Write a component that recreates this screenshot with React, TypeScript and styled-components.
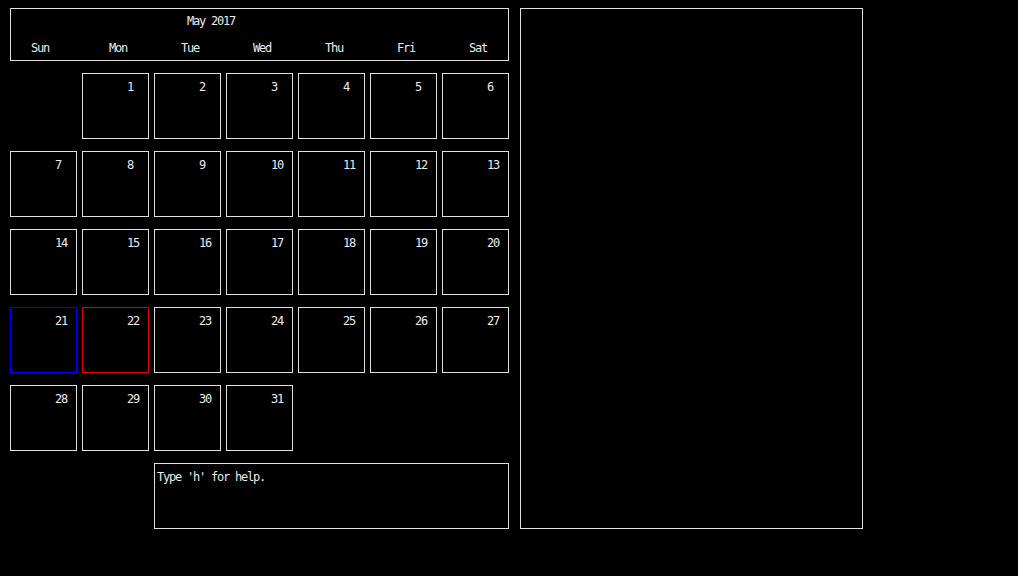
import React from "react";
import styled, { createGlobalStyle } from "styled-components";

const Global = createGlobalStyle`
  html, body { margin: 0; padding: 0; background: #000; }
  body { font-family: "DejaVu Sans Mono", "Liberation Mono", monospace; font-size: 12px; color: #ececec; }
`;

const Screen = styled.div`
  display: flex;
  gap: 11px;
  padding: 8px 10px;
  width: 1018px;
  height: 576px;
  box-sizing: border-box;
  background: #000;
`;

const LeftColumn = styled.div`
  display: flex;
  flex-direction: column;
  gap: 12px;
  width: 499px;
`;

const Header = styled.div`
  box-sizing: border-box;
  height: 53px;
  border: 1px solid #e0e0e0;
  display: flex;
  flex-direction: column;
  padding-top: 6px;
`;

const Title = styled.div`
  padding-left: 176px;
  line-height: 13px;
  height: 13px;
  letter-spacing: -1.22px;
`;

const WeekRow = styled.div`
  display: grid;
  grid-template-columns: repeat(7, 67px);
  column-gap: 5px;
  margin-top: 14px;
  margin-left: -2px;
`;

const DayName = styled.div<{ $offset: number }>`
  padding-left: ${(p) => p.$offset}px;
  line-height: 13px;
  letter-spacing: -1.22px;
`;

const Grid = styled.div`
  display: grid;
  grid-template-columns: repeat(7, 67px);
  grid-auto-rows: 66px;
  column-gap: 5px;
  row-gap: 12px;
`;

const Cell = styled.div<{ $col?: number; $color?: string }>`
  box-sizing: border-box;
  border: 1px solid ${(p) => p.$color || "#e0e0e0"};
  padding: 7px 0 0 44px;
  line-height: 13px;
  letter-spacing: -1.22px;
  ${(p) => (p.$col ? `grid-column-start: ${p.$col};` : "")}
`;

const MessageBox = styled.div`
  box-sizing: border-box;
  grid-column: 3 / 8;
  border: 1px solid #e0e0e0;
  padding: 7px 0 0 2px;
  line-height: 13px;
  letter-spacing: -1.22px;
`;

const SidePanel = styled.div`
  box-sizing: border-box;
  width: 343px;
  height: 521px;
  border: 1px solid #e0e0e0;
`;

const days = ["Sun", "Mon", "Tue", "Wed", "Thu", "Fri", "Sat"];

export default function App() {
  const dates = Array.from({ length: 31 }, (_, i) => i + 1);
  return (
    <>
      <Global />
      <Screen>
        <LeftColumn>
          <Header>
            <Title>May 2017</Title>
            <WeekRow>
              {days.map((d, i) => (
                <DayName key={d} $offset={i === 0 ? 22 : 28}>
                  {d}
                </DayName>
              ))}
            </WeekRow>
          </Header>
          <Grid>
            {dates.map((d) => (
              <Cell
                key={d}
                $col={d === 1 ? 2 : undefined}
                $color={d === 21 ? "#0000ff" : d === 22 ? "#e00000" : undefined}
              >
                {d}
              </Cell>
            ))}
            <MessageBox>Type 'h' for help.</MessageBox>
          </Grid>
        </LeftColumn>
        <SidePanel />
      </Screen>
    </>
  );
}
